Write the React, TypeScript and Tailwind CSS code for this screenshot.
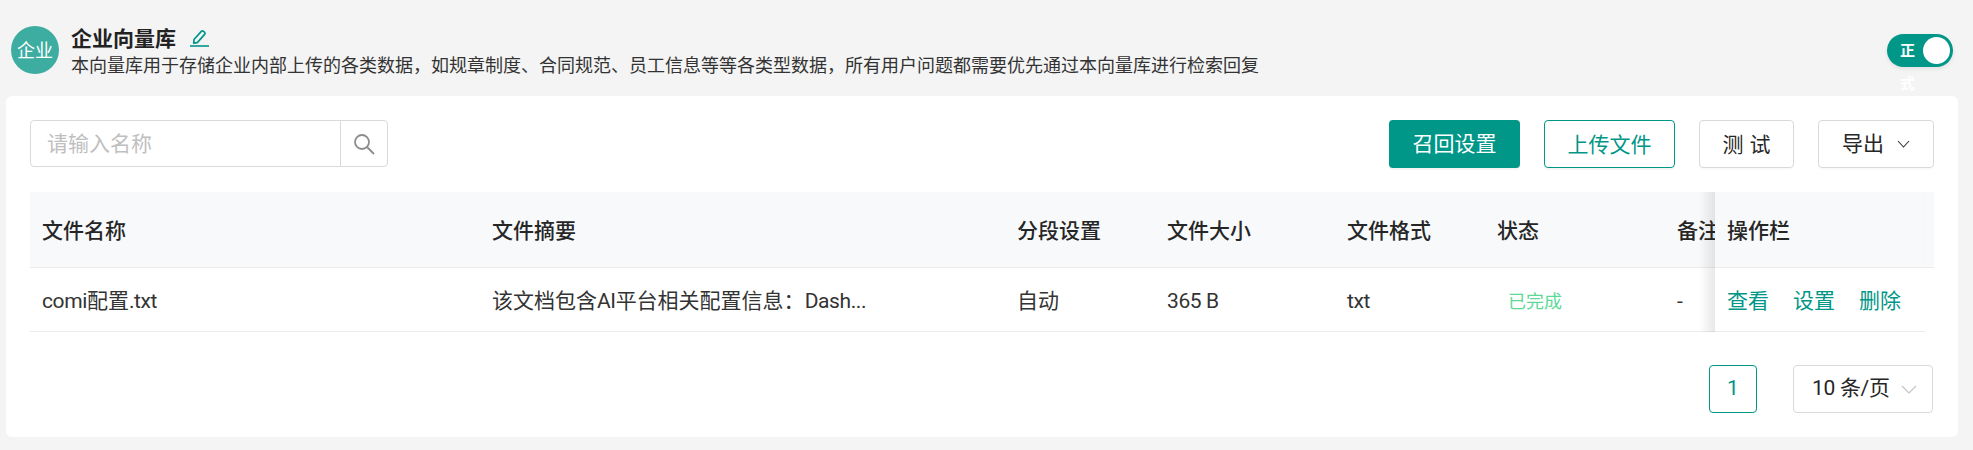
import React from "react";

const font = { fontFamily: 'Roboto, "Noto Sans CJK SC", sans-serif' };

function Latin({ children }: { children: React.ReactNode }) {
  return <span className="tracking-[-0.4px]">{children}</span>;
}

const columns: { title: string; cell: React.ReactNode; w: string }[] = [
  { title: "文件名称", cell: <><Latin>comi</Latin>配置<Latin>.txt</Latin></>, w: "w-[450px]" },
  { title: "文件摘要", cell: <>该文档包含<Latin>AI</Latin>平台相关配置信息：<Latin>Dash...</Latin></>, w: "w-[525px]" },
  { title: "分段设置", cell: "自动", w: "w-[150px]" },
  { title: "文件大小", cell: <Latin>365 B</Latin>, w: "w-[180px]" },
  { title: "文件格式", cell: <Latin>txt</Latin>, w: "w-[150px]" },
  { title: "状态", cell: "已完成", w: "w-[180px]" },
  { title: "备注", cell: "-", w: "w-[180px]" },
];

function Pencil() {
  return (
    <svg width="19" height="18" viewBox="0 0 19 18" fill="none" stroke="#009688" className="shrink-0 block">
      <path d="M4 10.5 11.3 2.4a1.6 1.6 0 0 1 2.2-.1l1 .9a1.6 1.6 0 0 1 .1 2.2L7.3 13.6l-3.6.6z" strokeWidth="1.7" strokeLinejoin="round" />
      <path d="M0 17h19" strokeWidth="1.6" />
    </svg>
  );
}

export default function App() {
  return (
    <div style={font} className="w-[1973px] h-[450px] overflow-hidden bg-[#f4f4f4] pl-[6px] pr-[15px] text-[21px] text-[#262626]">
      <header className="h-[96px] flex items-start pl-[5px] pr-[5px] pt-[26px]">
        <div className="w-[48px] h-[48px] rounded-full bg-[#3eada1] text-white text-[18px] leading-[50px] text-center shrink-0">企业</div>
        <div className="ml-[12px] flex-1">
          <div className="flex items-center h-[26px]">
            <span className="text-[21px] font-bold leading-[28px] text-[#222]">企业向量库</span>
            <span className="ml-[14px] -mt-[3px]"><Pencil /></span>
          </div>
          <p className="mt-px text-[18px] leading-[26px] text-[#333]">本向量库用于存储企业内部上传的各类数据，如规章制度、合同规范、员工信息等等各类型数据，所有用户问题都需要优先通过本向量库进行检索回复</p>
        </div>
        <div className="relative mt-[8px] w-[66px] h-[33px] rounded-full bg-[#009688] shadow-[0_2px_4px_rgba(0,0,0,0.08)] shrink-0">
          <span className="absolute left-[13px] top-[1px] w-[16px] text-[15px] font-bold leading-[33px] text-white">正式</span>
          <span className="absolute right-[3px] top-[3px] w-[27px] h-[27px] rounded-full bg-white" />
        </div>
      </header>
      <main className="h-[341px] bg-white rounded-[6px] px-[24px] pt-[24px]">
        <div className="flex items-start justify-between">
          <div className="flex h-[47px] w-[358px]">
            <div className="w-[311px] border border-[#d9d9d9] rounded-l-[4px] pl-[16px] leading-[47px] text-[#bfbfbf]">请输入名称</div>
            <div className="flex-1 -ml-px border border-[#d9d9d9] rounded-r-[4px] flex items-center justify-center">
              <svg width="24" height="24" viewBox="0 0 24 24" fill="none" stroke="#8c8c8c" strokeWidth="1.8">
                <circle cx="10" cy="10" r="7" />
                <path d="M15 15 22 22" />
              </svg>
            </div>
          </div>
          <div className="flex gap-[24px] leading-[48px]">
            <div className="w-[131px] h-[48px] rounded-[4px] bg-[#009688] text-white text-center shadow-[0_2px_0_rgba(0,0,0,0.04)]">召回设置</div>
            <div className="w-[131px] h-[48px] rounded-[4px] border border-[#009688] text-[#009688] text-center shadow-[0_2px_0_rgba(0,0,0,0.04)]">上传文件</div>
            <div className="w-[95px] h-[48px] rounded-[4px] border border-[#d9d9d9] flex justify-center gap-[6px] shadow-[0_2px_0_rgba(0,0,0,0.02)]"><span>测</span><span>试</span></div>
            <div className="w-[116px] h-[48px] rounded-[4px] border border-[#d9d9d9] flex items-center pl-[23px] gap-[13px] shadow-[0_2px_0_rgba(0,0,0,0.02)]">
              <span>导出</span>
              <svg width="13" height="8" viewBox="0 0 13 8" fill="none" stroke="#333" strokeWidth="1.1"><path d="M1 1l5.5 6L12 1" /></svg>
            </div>
          </div>
        </div>

        <div className="relative mt-[24px] w-[1904px]">
          <div className="flex h-[76px] bg-[#f8f9fb] border-b border-[#ebebeb] font-medium">
            {columns.map((c) => (
              <div key={c.title} className={`${c.w} shrink-0 pl-[12px] leading-[78px]`}>{c.title}</div>
            ))}
          </div>
          <div className="flex h-[64px] w-[1895px] border-b border-[#ebebeb]">
            {columns.map((c) =>
              c.title === "状态" ? (
                <div key={c.title} className={`${c.w} shrink-0 pl-[23px] leading-[67px] text-[18px] text-[#5dd897]`}>{c.cell}</div>
              ) : (
                <div key={c.title} className={`${c.w} shrink-0 pl-[12px] leading-[66px] text-[#333]`}>{c.cell}</div>
              ),
            )}
          </div>
          <div className="absolute left-[1669px] top-0 w-[16px] h-[140px] bg-gradient-to-r from-transparent to-[rgba(0,0,0,0.09)]" />
          <div className="absolute left-[1685px] top-0 w-[219px] h-[140px] overflow-hidden">
            <div className="h-[76px] bg-[#f8f9fb] border-b border-[#ebebeb]">
              <div className="w-[209px] h-[75px] pl-[12px] leading-[78px] font-medium border-r border-[#f6f7f9]">操作栏</div>
            </div>
            <div className="h-[64px] w-[210px] bg-white border-b border-[#ebebeb] pl-[12px] leading-[66px] text-[#009688] flex gap-[24px]">
              <span>查看</span><span>设置</span><span>删除</span>
            </div>
          </div>
        </div>

        <div className="mt-[33px] pr-px flex justify-end gap-[36px]">
          <div className="w-[48px] h-[48px] rounded-[4px] border border-[#009688] text-[#009688] flex items-center justify-center">1</div>
          <div className="w-[140px] h-[48px] rounded-[4px] border border-[#d9d9d9] flex items-center pl-[18px]">
            <span className="w-[89px] shrink-0 tracking-[-0.3px]">10 条/页</span>
            <svg width="16" height="9" viewBox="0 0 16 9" fill="none" stroke="#c4c4c4" strokeWidth="1.2"><path d="M1 1l7 7 7-7" /></svg>
          </div>
        </div>
      </main>
    </div>
  );
}
